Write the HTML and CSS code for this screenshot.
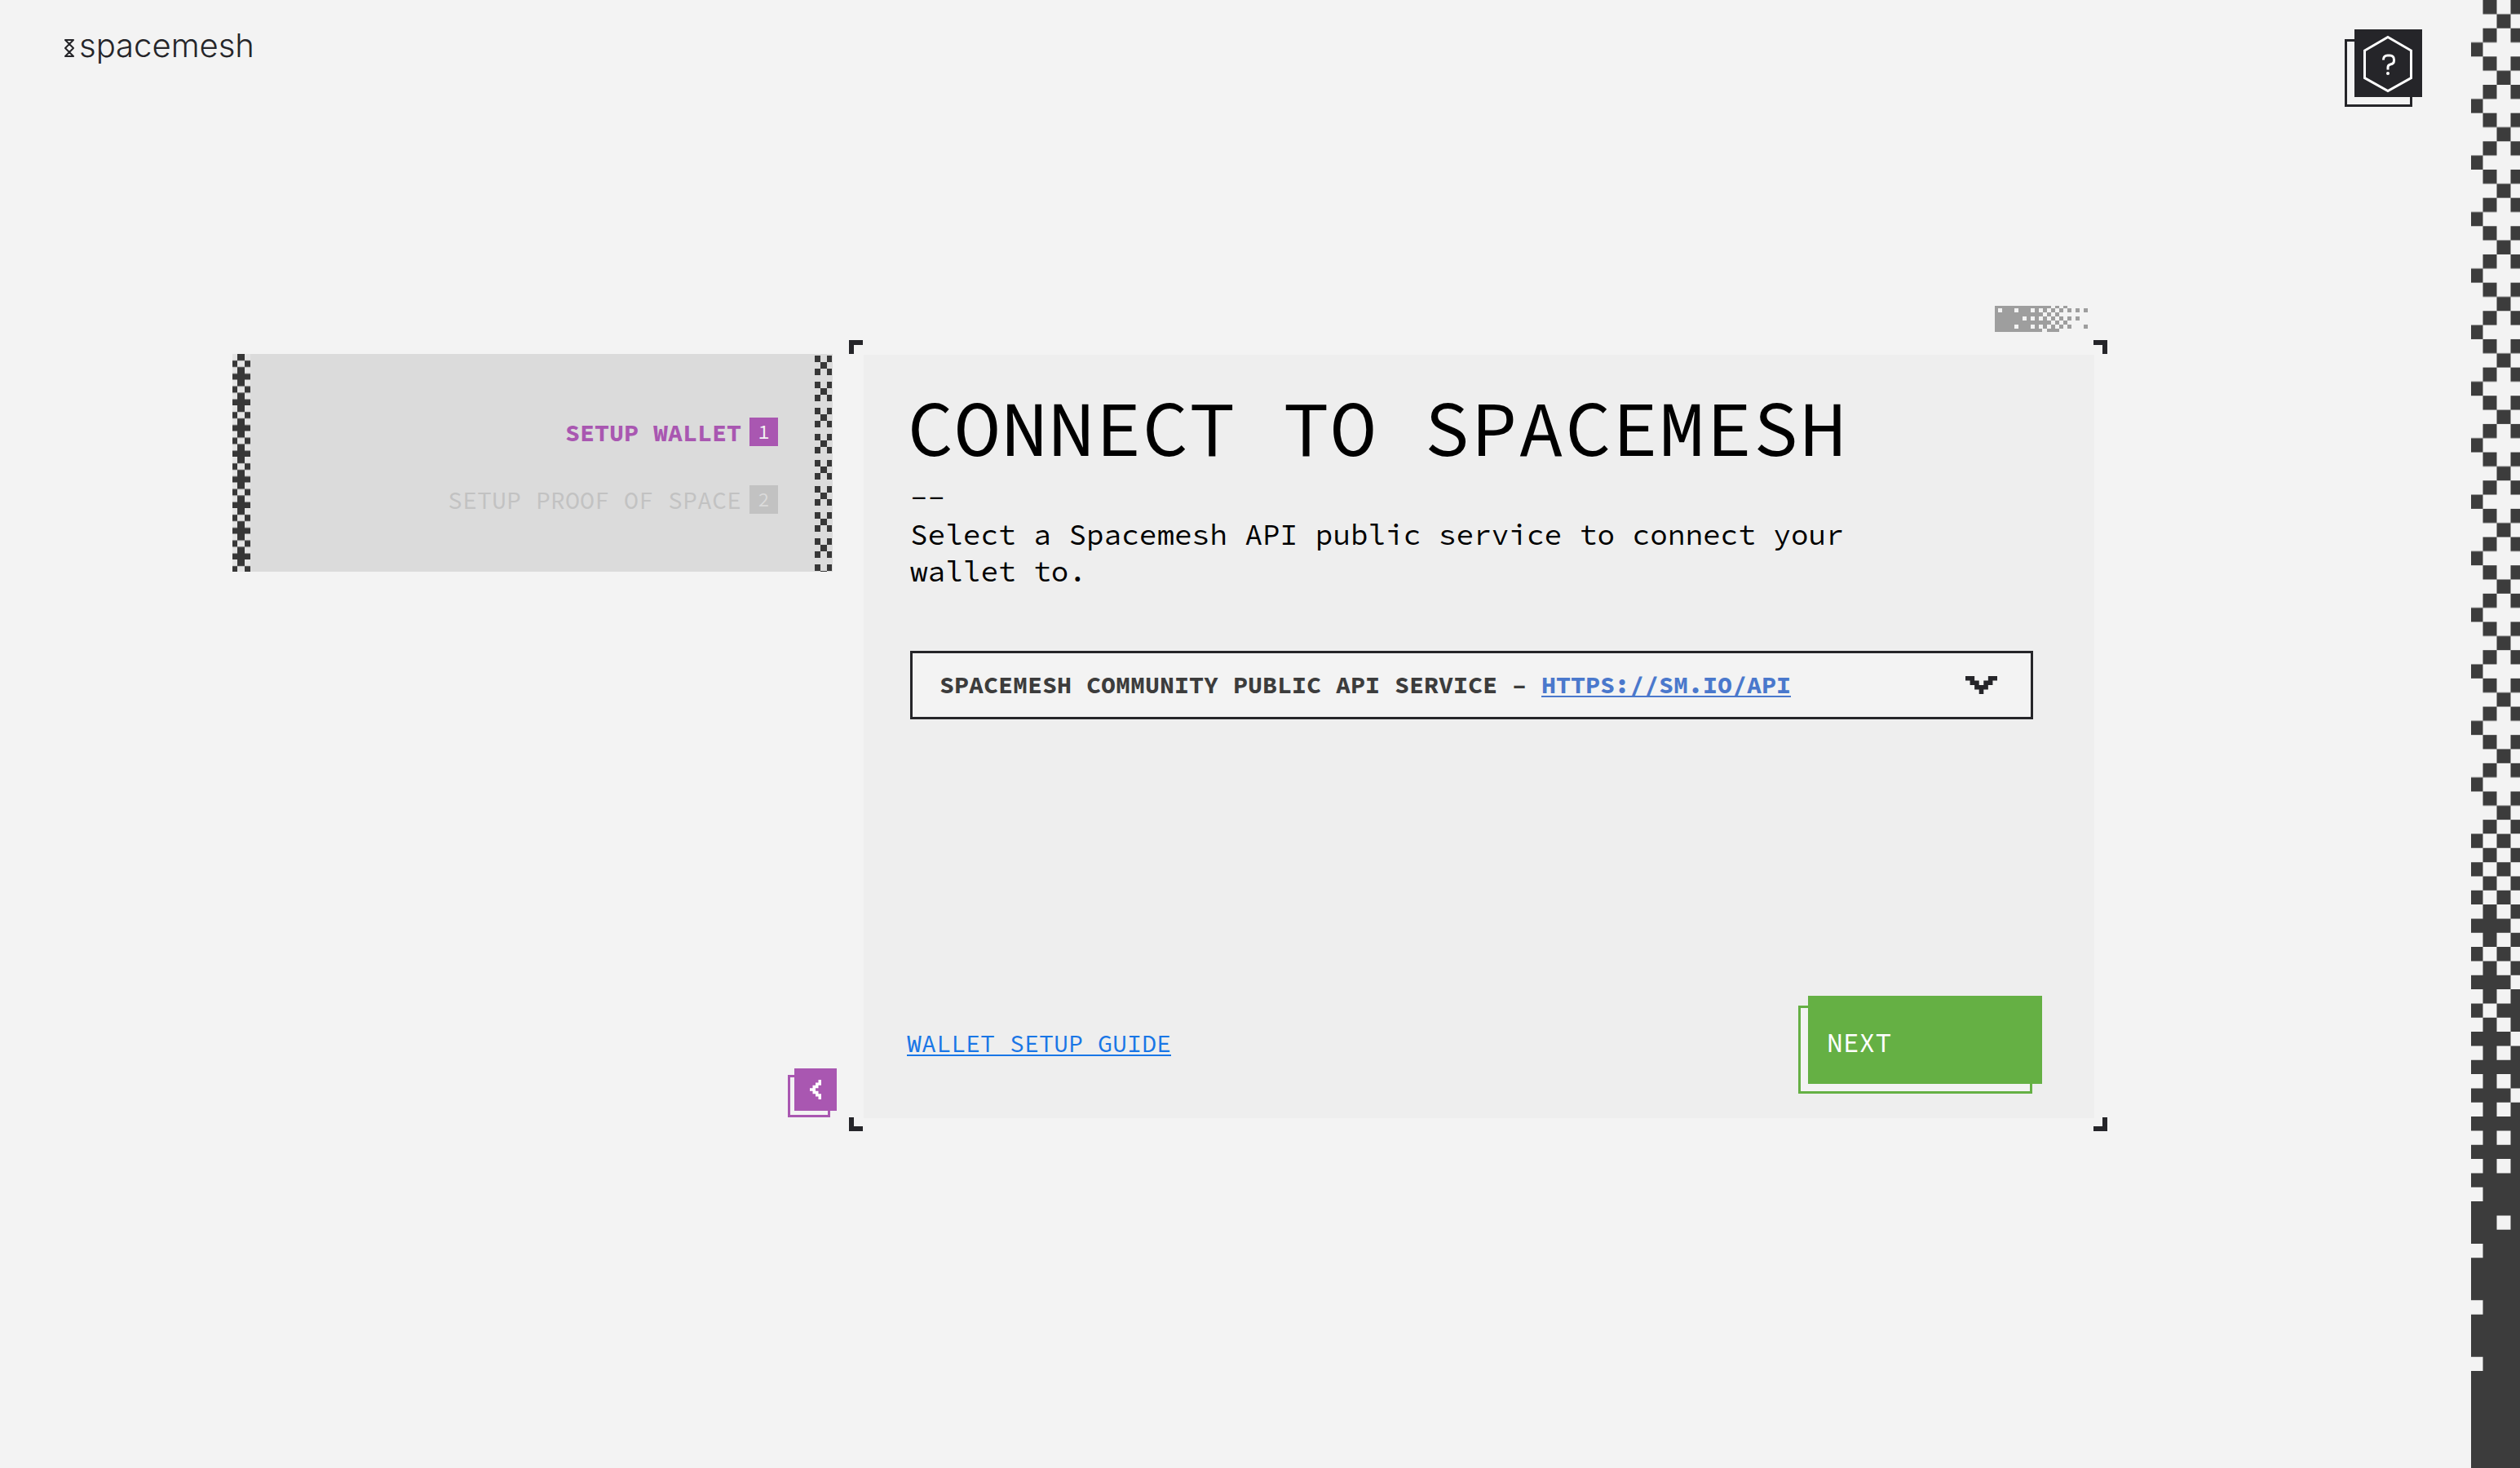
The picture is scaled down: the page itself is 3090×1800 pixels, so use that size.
FILE: index.html
```html
<!DOCTYPE html>
<html lang="en">
<head>
  <meta charset="utf-8">
  <meta name="viewport" content="width=device-width, initial-scale=1">
  <title>Connect to Spacemesh</title>
  <link rel="stylesheet" href="styles.css">
</head>
<body>
  <div class="app">
    <div class="page">
      <header class="header">
        <a class="logo" href="#">
          <svg class="logo-mark" width="12" height="22" viewBox="0 0 12 22" aria-hidden="true">
            <path d="M1 1h10L6 6 1 1zM6 6l5 5-5 5-5-5zM6 16l5 5H1z" fill="none" stroke="#252529" stroke-width="2" stroke-linejoin="round"/>
          </svg>
          <span>spacemesh</span>
        </a>
        <button class="layered help" type="button" aria-label="Help">
          <svg width="83" height="83" viewBox="0 0 83 83" fill="none" stroke="#fff" stroke-width="3" aria-hidden="true">
            <path d="M41 9.500L69.500 26v33.500L41 75.500 12.500 59.500V26z"/>
            <path d="M35.500 37.500V37c0-3 2-5 5-5h3c3 0 5 2 5 5v1.500c0 3-2 4-4.500 4.500-2 .5-3 1.500-3 3.500v3"/>
            <circle cx="41" cy="54" r="2" fill="#fff" stroke="none"/>
          </svg>
        </button>
      </header>

      <main class="main">
        <div class="side">
          <nav class="steps" aria-label="Setup steps">
            <svg class="edge" aria-hidden="true">
              <defs>
                <pattern id="crosses" width="22" height="31.500" patternUnits="userSpaceOnUse">
                  <path fill="#e4e4e4" d="M0 0h22v32H0z"/>
                  <path fill="#373737" d="M6 0h9v8H6zM0 8h6v8H0zM15 8h7v8h-7zM6 16h9v16H6zM0 24h22v7.500H0z"/>
                </pattern>
              </defs>
              <rect width="22" height="100%" fill="url(#crosses)"/>
            </svg>
            <ol class="step-list">
              <li class="step step-current" aria-current="step"><span class="step-label">SETUP WALLET</span><span class="step-number">1</span></li>
              <li class="step"><span class="step-label">SETUP PROOF OF SPACE</span><span class="step-number">2</span></li>
            </ol>
            <svg class="edge" aria-hidden="true">
              <defs>
                <pattern id="checks" y="2" width="22" height="32" patternUnits="userSpaceOnUse">
                  <path fill="#373737" d="M0 0h7v8H0zM15 0h6v8h-6zM7 8h8v8H7zM0 16h7v8H0zM15 16h6v8h-6z"/>
                </pattern>
              </defs>
              <rect y="2" width="22" height="100%" fill="url(#checks)"/>
            </svg>
          </nav>
          <button class="layered back" type="button" aria-label="Back">
            <svg width="14" height="24" viewBox="0 0 4 7" preserveAspectRatio="none" aria-hidden="true">
              <path fill="#fff" d="M3 0h1v2H3v1H2v1h1v1h1v2H3V6H2V5H1V4H0V3h1V2h1V1h1z"/>
            </svg>
          </button>
        </div>

        <div class="content">
          <svg class="dither" width="114" height="32" viewBox="0 0 114 32" aria-hidden="true">
            <path fill="#9e9e9e" d="M0 0h69v3h-5v5h-5v5h5v5h5v5h-5v5h-6v4H0z"/>
            <path fill="#9e9e9e" d="M74 0h5v3h-5zM84 0h5v3h-5zM69 3h5v5h-5zM79 3h5v5h-5zM89 3h5v5h-5zM99 3h5v5h-5zM109 3h5v5h-5zM64 8h5v5h-5zM74 8h5v5h-5zM69 13h5v5h-5zM79 13h5v5h-5zM89 13h5v5h-5zM99 13h5v5h-5zM59 13h5v5h-5zM74 18h5v5h-5zM84 18h5v5h-5zM59 23h5v5h-5zM69 23h5v5h-5zM79 23h5v5h-5zM89 23h5v5h-5zM109 23h5v5h-5zM64 28h15v4H64z"/>
            <path fill="#f3f3f3" d="M4 3h5v5H4zM24 3h5v5h-5zM44 3h5v5h-5zM54 3h5v5h-5zM34 13h5v5h-5zM44 13h5v5h-5zM54 13h5v5h-5zM24 23h5v5h-5zM44 23h5v5h-5zM54 23h5v5h-5z"/>
          </svg>

          <section class="panel">
            <span class="corner corner-tl"></span>
            <span class="corner corner-tr"></span>
            <span class="corner corner-bl"></span>
            <span class="corner corner-br"></span>

            <h1 class="title">CONNECT TO SPACEMESH</h1>
            <div class="intro">
              <div>--</div>
              <label for="service">Select a Spacemesh API public service to connect your wallet to.</label>
            </div>

            <div class="dropdown">
              <select class="dropdown-select" id="service">
                <option value="https://sm.io/api" label="Spacemesh community public API service" selected></option>
              </select>
              <div class="dropdown-value">
                <span>SPACEMESH COMMUNITY PUBLIC API SERVICE – <a class="dropdown-link" href="#">HTTPS://SM.IO/API</a></span>
                <svg width="39" height="22" viewBox="0 0 7 4" preserveAspectRatio="none" aria-hidden="true">
                  <path fill="#252529" d="M0 0h2v1h1v1h1V1h1V0h2v1H6v1H5v1H4v1H3V3H2V2H1V1H0z"/>
                </svg>
              </div>
            </div>

            <div class="actions">
              <a class="guide" href="#">WALLET SETUP GUIDE</a>
              <button class="layered next" type="button">NEXT</button>
            </div>
          </section>
        </div>
      </main>
    </div>

    <aside class="strip" aria-hidden="true">
      <svg width="60" height="1700" viewBox="0 0 60 1700">
        <defs>
          <pattern id="weave" width="4" height="4" patternUnits="userSpaceOnUse">
            <path fill="#3c3c3c" d="M1 0h1v1H1zM3 0h1v1H3zM2 1h1v1H2zM1 2h1v1H1zM3 2h1v1H3zM0 3h1v1H0z"/>
          </pattern>
        </defs>
        <g transform="translate(-2.500 0) scale(17 17.330)">
          <path fill="#f3f3f3" d="M0 0h4v70H0z"/>
          <rect width="4" height="59" fill="url(#weave)"/>
          <path fill="#3c3c3c" d="M0 59h1v1H0zM2 59h1v1H2zM1 60h1v1H1zM3 60h1v1H3zM0 61h1v1H0zM2 61h1v1H2zM1 62h1v1H1zM3 62h1v1H3zM0 63h1v1H0zM2 63h1v1H2zM1 64h1v3H1zM3 64h1v1H3zM0 65h3v1H0zM3 66h1v1H3zM0 67h1v1H0zM2 67h1v1H2zM1 68h1v2H1zM3 68h1v1H3zM0 69h3v1H0z"/>
          <path fill="#f3f3f3" d="M0 70h1v1H0zM2 70h1v1H2zM1 71h1v1H1zM0 72h1v1H0zM2 72h1v1H2zM3 73h1v1H3zM0 74h1v1H0zM2 74h1v1H2zM0 76h1v1H0zM2 76h1v1H2zM3 77h1v1H3zM0 78h1v1H0zM2 78h1v1H2zM0 80h1v1H0zM2 80h1v1H2zM0 82h1v1H0zM2 82h1v1H2zM0 84h1v1H0zM2 86h1v1H2zM0 88h1v1H0zM0 92h1v1H0zM0 96h1v1H0z"/>
        </g>
      </svg>
    </aside>
  </div>
</body>
</html>
```
FILE: styles.css
```css
* {
  box-sizing: border-box;
}

body {
  margin: 0;
  background: #f3f3f3;
  color: #000;
  font-family: "Source Code Pro", "Liberation Mono", monospace;
}

button {
  font: inherit;
  cursor: pointer;
}

svg {
  display: block;
}

.app {
  display: grid;
  grid-template-columns: minmax(0, 1fr) 60px;
  min-height: 100vh;
}

.strip {
  background: #3c3c3c;
  overflow: hidden;
}

/* Header */

.header {
  display: flex;
  justify-content: space-between;
  align-items: flex-start;
  padding: 36px 60px 0 79px;
}

.logo {
  display: flex;
  align-items: center;
  gap: 6px;
  color: #252529;
  font-family: Inter, sans-serif;
  font-size: 40px;
  font-weight: 300;
  line-height: 40px;
  text-decoration: none;
}

.logo-mark {
  margin-top: 6px;
}

/* Solid button over an offset outline */

.layered {
  position: relative;
  z-index: 0;
  padding: 0;
  border: 0;
  color: #fff;
}

.layered::before,
.layered::after {
  content: "";
  position: absolute;
  inset: 0;
  z-index: -1;
  background: var(--fill);
}

.layered::before {
  inset: var(--shift) var(--shift) calc(0px - var(--shift)) calc(0px - var(--shift));
  border: 3px solid var(--fill);
  background: #f3f3f3;
}

.help {
  --fill: #252529;
  --shift: 12px;
  width: 83px;
  height: 83px;
}

.back {
  --fill: #a957b1;
  --shift: 8px;
  display: grid;
  place-items: center;
  width: 52px;
  height: 52px;
  margin: 0 -5px 9px 0;
}

.next {
  --fill: #65b044;
  --shift: 12px;
  width: 287px;
  height: 108px;
  padding: 7px 0 0 23px;
  font-size: 33px;
  text-align: left;
}

/* Main columns */

.main {
  display: grid;
  grid-template-columns: minmax(0, 736fr) minmax(0, 1509fr);
  gap: 38px;
  padding: 256px 462px 0 285px;
}

.side {
  display: flex;
  flex-direction: column;
  justify-content: space-between;
  align-items: flex-end;
  padding-top: 59px;
}

.steps {
  display: flex;
  width: 100%;
  background: #dbdbdb;
}

.edge {
  flex: none;
  width: 22px;
  height: auto;
}

.step-list {
  display: flex;
  flex: 1;
  flex-direction: column;
  gap: 47px;
  margin: 0;
  padding: 78px 45px 70px 0;
  list-style: none;
}

.step {
  display: flex;
  justify-content: flex-end;
  align-items: flex-start;
  gap: 10px;
  color: #c2c2c2;
  font-size: 30px;
  line-height: 36px;
}

.step-number {
  width: 35px;
  height: 35px;
  background: #c2c2c2;
  color: #dbdbdb;
  font-size: 24px;
  font-weight: 400;
  text-align: center;
}

.step-current {
  color: #a957b1;
  font-weight: 700;
}

.step-current .step-number {
  background: #a957b1;
  color: #f3f3f3;
}

.content {
  display: flex;
  flex-direction: column;
  gap: 28px;
}

.dither {
  align-self: flex-end;
  margin-right: 8px;
}

/* Panel */

.panel {
  position: relative;
  display: flex;
  flex-direction: column;
  min-height: 936px;
  padding: 42px 64px 42px 53px;
  background: #eee;
}

.corner {
  position: absolute;
  width: 17px;
  height: 17px;
  border: 0 solid #252529;
}

.corner-tl {
  top: -18px;
  left: -18px;
  border-width: 6px 0 0 6px;
}

.corner-tr {
  top: -18px;
  right: -16px;
  border-width: 6px 6px 0 0;
}

.corner-bl {
  bottom: -16px;
  left: -18px;
  border-width: 0 0 6px 6px;
}

.corner-br {
  bottom: -16px;
  right: -16px;
  border-width: 0 6px 6px 0;
}

.title {
  margin: 0;
  font-size: 96px;
  font-weight: 400;
  line-height: 96px;
}

.intro {
  max-width: 1200px;
  margin: 15px 0 75px 4px;
  font-size: 36px;
  line-height: 45px;
}

.dropdown {
  display: grid;
  height: 84px;
  margin: 0 11px 0 4px;
  border: 3px solid #252529;
  background: #f3f3f3;
}

.dropdown-select,
.dropdown-value {
  grid-area: 1 / 1;
  width: 100%;
}

.dropdown-select {
  opacity: 0;
  cursor: pointer;
}

.dropdown-value {
  display: flex;
  justify-content: space-between;
  align-items: center;
  padding: 0 41px 0 33px;
  color: #3c3c3c;
  font-size: 30px;
  font-weight: 700;
  pointer-events: none;
}

.dropdown-value span {
  padding-bottom: 2px;
}

.dropdown-link {
  color: #4a78cc;
  text-decoration-thickness: 2px;
  text-underline-offset: 3px;
  text-decoration-skip-ink: none;
  pointer-events: auto;
}

.actions {
  display: flex;
  justify-content: space-between;
  align-items: center;
  margin-top: auto;
}

.guide {
  padding-top: 8px;
  color: #1976e6;
  font-size: 30px;
  text-decoration-thickness: 2px;
  text-underline-offset: 3px;
}
```
